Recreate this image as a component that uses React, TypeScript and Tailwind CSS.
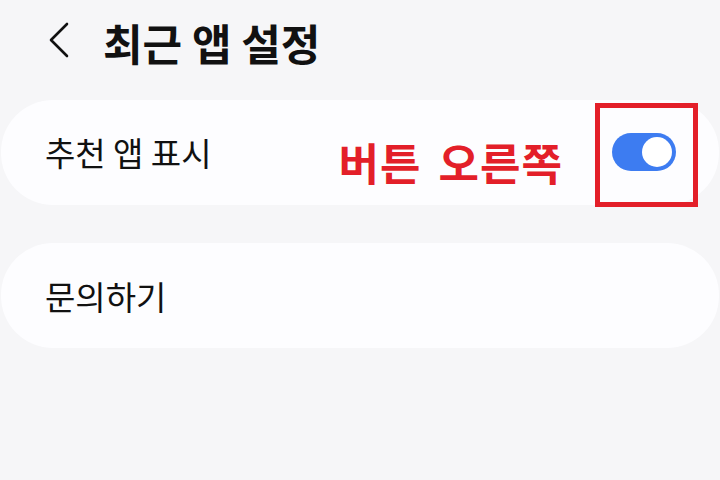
import React from 'react';

const font = { fontFamily: '"Noto Sans CJK KR", "Noto Sans", sans-serif' };

function Toggle({ on }: { on: boolean }) {
  return (
    <div
      className={`flex h-[38px] w-[64px] items-center rounded-full px-[4px] ${
        on ? 'justify-end bg-[#3d7cf1]' : 'justify-start bg-gray-300'
      }`}
    >
      <div className="h-[30px] w-[30px] rounded-full bg-white" />
    </div>
  );
}

export default function App() {
  return (
    <div
      className="h-[480px] w-[720px] overflow-hidden bg-[#f6f6f8] text-[#111]"
      style={font}
    >
      {/* header */}
      <div className="flex h-[82px] items-center pl-[48px]">
        <svg width="22" height="36" viewBox="0 0 22 36" className="mt-[-2px]">
          <path d="M19 2 L3 18 L19 34" fill="none" stroke="#111" strokeWidth="2.6" strokeLinecap="round" strokeLinejoin="round" />
        </svg>
        <h1 className="ml-[33px] mt-[2px] text-[43px] font-bold leading-none">최근 앱 설정</h1>
      </div>

      {/* recommended apps */}
      <div className="mx-[1px] mt-[18px] flex h-[105px] items-start rounded-[52px] bg-[#fdfdff] pl-[44px] pr-[21px]">
        <span className="mt-[36px] flex-1 text-[33px] leading-none">추천 앱 표시</span>
        <span className="mr-[32px] mt-[40px] text-[44px] font-bold leading-none tracking-[1px] text-[#e31f29] [word-spacing:6px]">
          버튼 오른쪽
        </span>
        <div className="mt-[3px] flex h-[104px] w-[103px] items-start border-[5px] border-[#e31f29] pl-[12px] pt-[25px]">
          <Toggle on />
        </div>
      </div>

      {/* contact */}
      <div className="mx-[1px] mt-[38px] flex h-[105px] items-center rounded-[52px] bg-[#fdfdff] pl-[44px]">
        <span className="mt-[2px] text-[33px] leading-none">문의하기</span>
      </div>
    </div>
  );
}
